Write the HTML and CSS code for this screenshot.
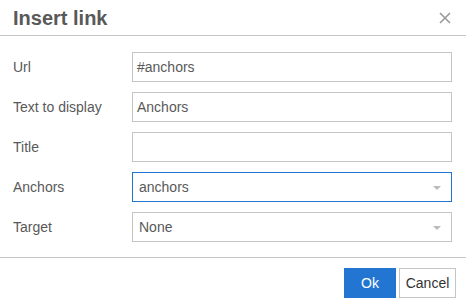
FILE: index.html
```html
<!DOCTYPE html>
<html>
<head>
<meta charset="utf-8">
<link rel="stylesheet" href="styles.css">
</head>
<body>
<div class="dialog">
  <div class="head">
    <div class="title">Insert link</div>
    <div class="close">
      <svg width="14" height="14" viewBox="0 0 14 14"><path d="M2 2L12 12M12 2L2 12" stroke="#999" stroke-width="1.6" fill="none"/></svg>
    </div>
  </div>
  <div class="body">
    <div class="row"><label>Url</label><div class="field">#anchors</div></div>
    <div class="row"><label>Text to display</label><div class="field">Anchors</div></div>
    <div class="row"><label>Title</label><div class="field"></div></div>
    <div class="row"><label>Anchors</label><div class="field select focus">anchors<span class="caret"></span></div></div>
    <div class="row"><label>Target</label><div class="field select">None<span class="caret"></span></div></div>
  </div>
  <div class="foot">
    <button class="btn primary">Ok</button>
    <button class="btn">Cancel</button>
  </div>
</div>
</body>
</html>
```
FILE: styles.css
```css
html, body { margin: 0; padding: 0; background: #fff; }
body { font-family: "Liberation Sans", Arial, sans-serif; color: #595959; }
.dialog { width: 466px; height: 305px; }
.head {
  height: 35px;
  border-bottom: 1px solid #c5c5c5;
  display: flex;
  align-items: center;
  justify-content: space-between;
  padding: 0 12px 0 13px;
  box-sizing: content-box;
}
.title { font-size: 20px; font-weight: bold; color: #595959; line-height: 24px; margin-top: 1px; }
.close { width: 14px; height: 14px; display: flex; margin-right: 2px; margin-top: 1px; }
.body { padding: 16px 14px 15px 13px; display: flex; flex-direction: column; gap: 10px; }
.row { display: flex; align-items: center; height: 30px; }
.row label { width: 119px; font-size: 14px; color: #595959; }
.field {
  box-sizing: border-box;
  width: 320px; height: 30px;
  border: 1px solid #c5c5c5;
  font-size: 14px; color: #595959;
  padding: 0 0 0 4px;
  display: flex; align-items: center;
  position: relative;
}
.field.select { padding-left: 6px; }
.field.focus { border-color: #2276d2; }
.caret {
  position: absolute; right: 10px; top: 13px;
  width: 0; height: 0;
  border-left: 4px solid transparent;
  border-right: 4px solid transparent;
  border-top: 4px solid #bbbbbb;
}
.foot {
  border-top: 1px solid #c5c5c5;
  display: flex; justify-content: flex-end; gap: 3px;
  padding: 10px 10px 0 0;
}
.btn {
  font-family: "Liberation Sans", Arial, sans-serif;
  font-size: 14px; height: 30px; margin: 0;
  background: #fff; color: #333; border: 1px solid #c5c5c5;
  padding: 0 5px; width: 57px; box-sizing: border-box;
}
.btn.primary { background: #2276d2; border-color: #2276d2; color: #fff; width: 52px; }
```
